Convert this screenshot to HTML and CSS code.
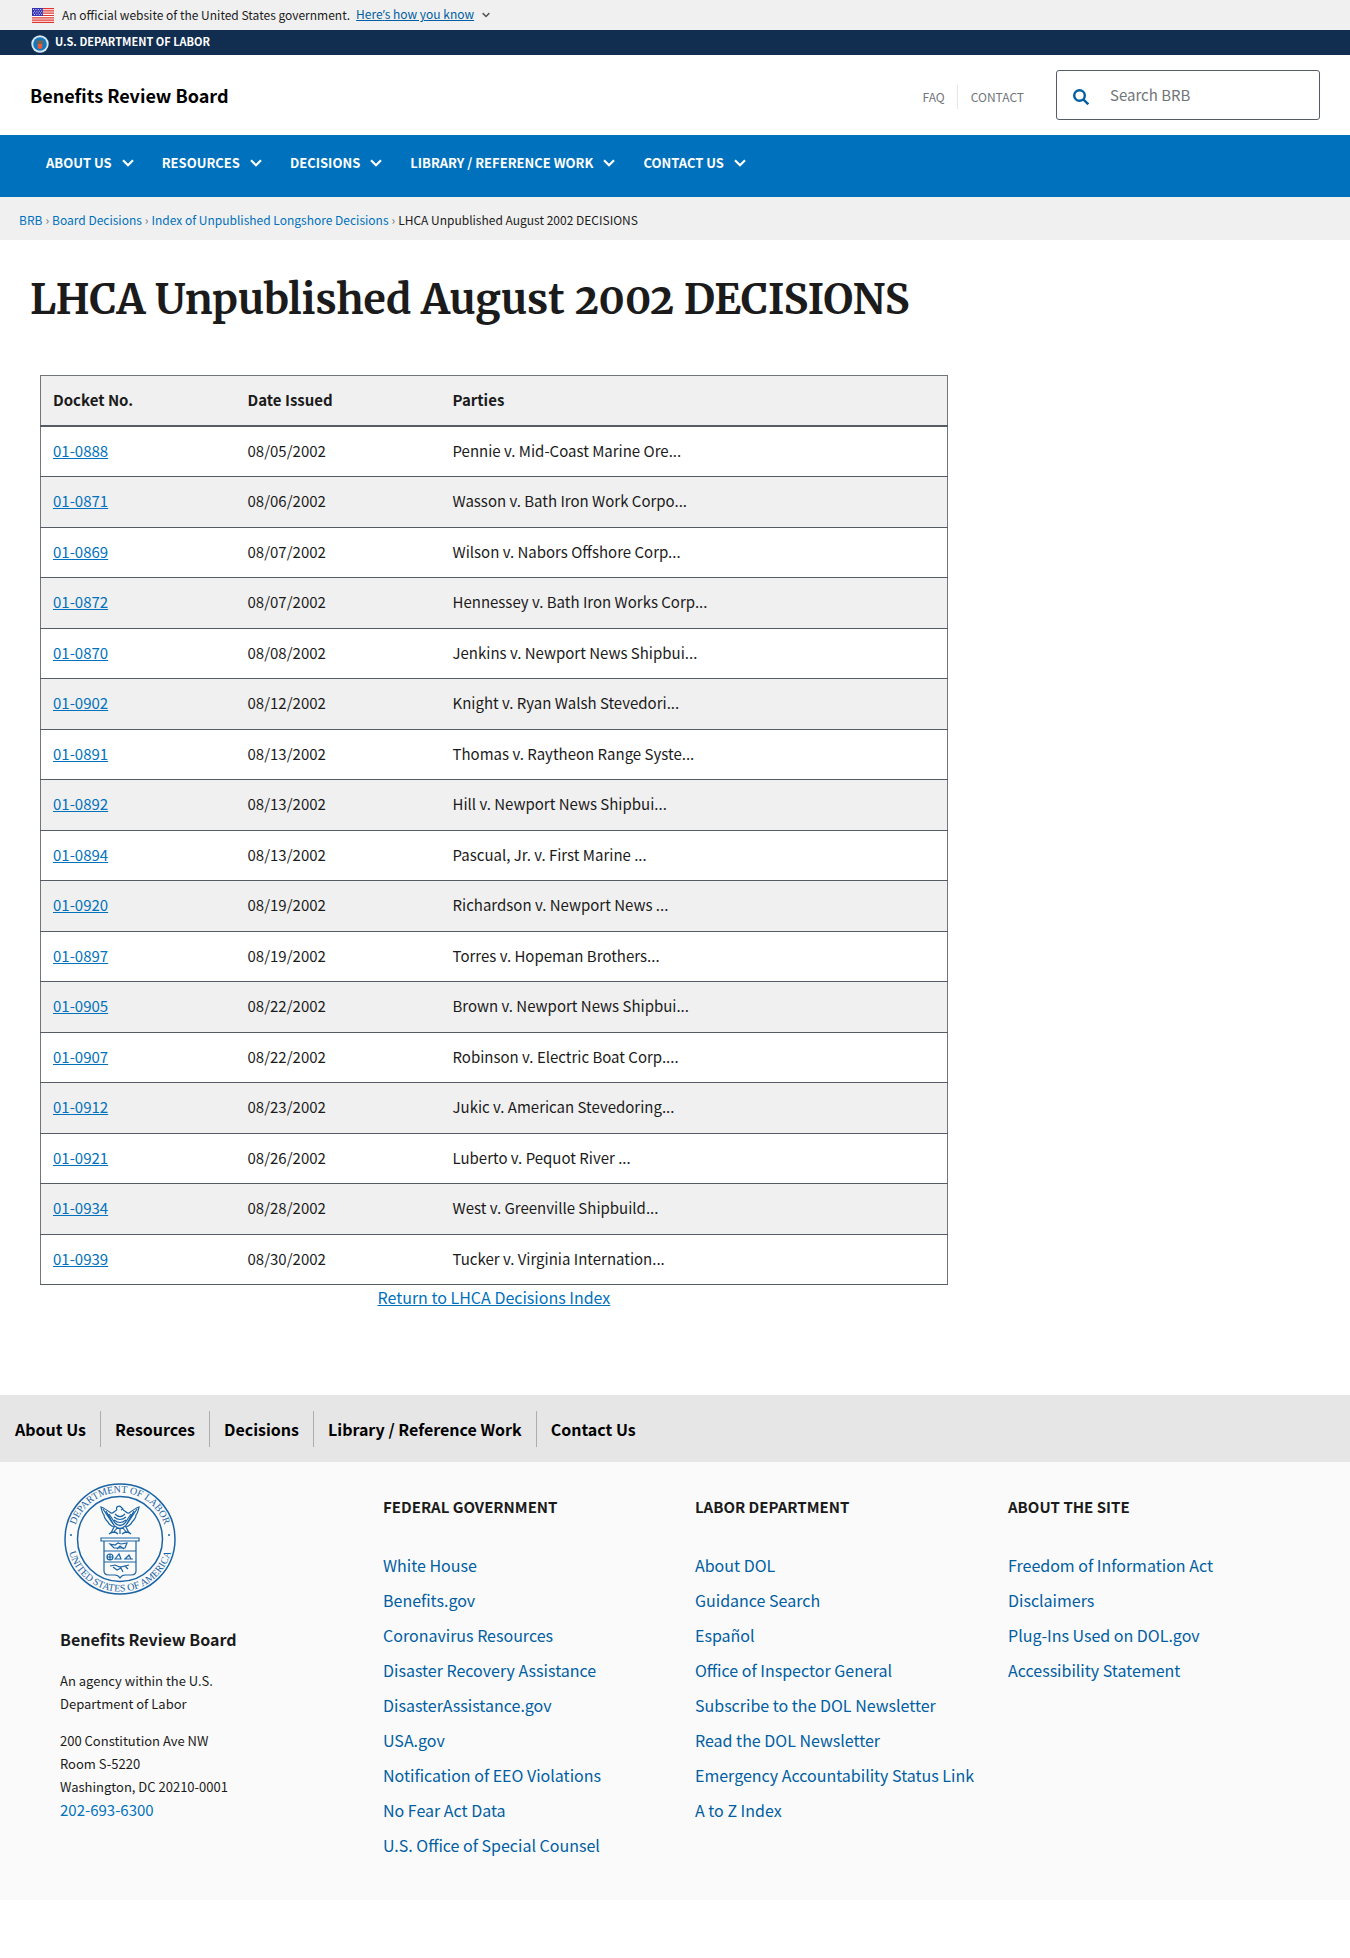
FILE: index.html
```html
<!DOCTYPE html>
<html lang="en">
<head>
<meta charset="utf-8">
<meta name="viewport" content="width=device-width, initial-scale=1">
<title>LHCA Unpublished August 2002 DECISIONS</title>
<link rel="stylesheet" href="styles.css">
</head>
<body>
<svg width="0" height="0" class="sprite" aria-hidden="true">
  <symbol id="chevron" viewBox="0 0 12 8"><path d="M1 1.2l5 5 5-5" fill="none" stroke="currentColor" stroke-width="2.2"/></symbol>
</svg>
<section class="gov-banner" aria-label="Official government website">
  <svg class="flag" viewBox="0 0 22 15" aria-hidden="true">
    <rect width="22" height="15" fill="#fff"/>
    <path d="M0 .6h22M0 2.9h22M0 5.2h22M0 7.5h22M0 9.8h22M0 12.1h22M0 14.4h22" stroke="#e0342f" stroke-width="1.2"/>
    <rect width="11" height="8" fill="#3431b5"/>
    <path d="M1 1.5h10M2 3.2h9M1 4.9h10M2 6.6h9" stroke="#fff" stroke-width=".8" stroke-dasharray="1 1.4"/>
  </svg>
  <span>An official website of the United States government.</span>
  <button type="button" class="banner-toggle"><span class="toggle-text">Here<span class="apostrophe">’</span>s how you know</span><svg class="toggle-icon" aria-hidden="true"><use href="#chevron"/></svg></button>
</section>
<div class="department">
  <svg class="department-seal" viewBox="0 0 18 18" aria-hidden="true">
    <circle cx="9" cy="9" r="8.7" fill="#d5e6f3"/><circle cx="9" cy="9" r="6.8" fill="#1677bd"/>
    <path d="M5.5 5l2 1.2L9 4l1.5 2.2 2-1.2-1 4h-5z" fill="#7b6449"/><path d="M6.8 9h4.4v4L9 14.3 6.8 13z" fill="#ef5a35"/>
  </svg>
  <a href="#">U.S. DEPARTMENT OF LABOR</a>
</div>
<header class="site-header">
  <a class="site-name" href="#">Benefits Review Board</a>
  <nav class="utility" aria-label="Utility"><a href="#">FAQ</a><a href="#">CONTACT</a></nav>
  <form class="search" role="search">
    <svg class="search-icon" viewBox="0 0 16 16" aria-hidden="true"><circle cx="6.5" cy="6.5" r="5.3"/><path d="M10.3 10.3l5 5"/></svg>
    <input type="search" aria-label="Search BRB" placeholder="Search BRB">
  </form>
</header>
<nav class="main-nav" aria-label="Main">
  <button type="button">ABOUT US<svg class="nav-icon" aria-hidden="true"><use href="#chevron"/></svg></button>
  <button type="button">RESOURCES<svg class="nav-icon" aria-hidden="true"><use href="#chevron"/></svg></button>
  <button type="button">DECISIONS<svg class="nav-icon" aria-hidden="true"><use href="#chevron"/></svg></button>
  <button type="button">LIBRARY / REFERENCE WORK<svg class="nav-icon" aria-hidden="true"><use href="#chevron"/></svg></button>
  <button type="button">CONTACT US<svg class="nav-icon" aria-hidden="true"><use href="#chevron"/></svg></button>
</nav>
<nav class="breadcrumb" aria-label="Breadcrumb">
  <a href="#">BRB</a><span class="sep">›</span><a href="#">Board Decisions</a><span class="sep">›</span><a href="#">Index of Unpublished Longshore Decisions</a><span class="sep">›</span><span>LHCA Unpublished August 2002 DECISIONS</span>
</nav>
<main class="content">
  <h1>LHCA Unpublished August 2002 DECISIONS</h1>
  <div class="article">
    <table class="decisions">
      <thead><tr><th scope="col" class="docket">Docket No.</th><th scope="col" class="date">Date Issued</th><th scope="col">Parties</th></tr></thead>
      <tbody>
        <tr><td><a href="#">01-0888</a></td><td>08/05/2002</td><td>Pennie v. Mid-Coast Marine Ore...</td></tr>
        <tr><td><a href="#">01-0871</a></td><td>08/06/2002</td><td>Wasson v. Bath Iron Work Corpo...</td></tr>
        <tr><td><a href="#">01-0869</a></td><td>08/07/2002</td><td>Wilson v. Nabors Offshore Corp...</td></tr>
        <tr><td><a href="#">01-0872</a></td><td>08/07/2002</td><td>Hennessey v. Bath Iron Works Corp...</td></tr>
        <tr><td><a href="#">01-0870</a></td><td>08/08/2002</td><td>Jenkins v. Newport News Shipbui...</td></tr>
        <tr><td><a href="#">01-0902</a></td><td>08/12/2002</td><td>Knight v. Ryan Walsh Stevedori...</td></tr>
        <tr><td><a href="#">01-0891</a></td><td>08/13/2002</td><td>Thomas v. Raytheon Range Syste...</td></tr>
        <tr><td><a href="#">01-0892</a></td><td>08/13/2002</td><td>Hill v. Newport News Shipbui...</td></tr>
        <tr><td><a href="#">01-0894</a></td><td>08/13/2002</td><td>Pascual, Jr. v. First Marine ...</td></tr>
        <tr><td><a href="#">01-0920</a></td><td>08/19/2002</td><td>Richardson v. Newport News ...</td></tr>
        <tr><td><a href="#">01-0897</a></td><td>08/19/2002</td><td>Torres v. Hopeman Brothers...</td></tr>
        <tr><td><a href="#">01-0905</a></td><td>08/22/2002</td><td>Brown v. Newport News Shipbui...</td></tr>
        <tr><td><a href="#">01-0907</a></td><td>08/22/2002</td><td>Robinson v. Electric Boat Corp....</td></tr>
        <tr><td><a href="#">01-0912</a></td><td>08/23/2002</td><td>Jukic v. American Stevedoring...</td></tr>
        <tr><td><a href="#">01-0921</a></td><td>08/26/2002</td><td>Luberto v. Pequot River ...</td></tr>
        <tr><td><a href="#">01-0934</a></td><td>08/28/2002</td><td>West v. Greenville Shipbuild...</td></tr>
        <tr><td><a href="#">01-0939</a></td><td>08/30/2002</td><td>Tucker v. Virginia Internation...</td></tr>
      </tbody>
    </table>
    <p class="return"><a href="#">Return to LHCA Decisions Index</a></p>
  </div>
</main>
<footer>
  <nav class="footer-nav" aria-label="Footer"><a href="#">About Us</a><a href="#">Resources</a><a href="#">Decisions</a><a href="#">Library / Reference Work</a><a href="#">Contact Us</a></nav>
  <div class="footer-main">
    <div class="agency">
      <svg class="seal" viewBox="0 0 112 112" role="img" aria-label="Department of Labor seal">
        <defs><path id="arc-top" d="M9.5 56a46.5 46.5 0 0 1 93 0"/><path id="arc-bottom" d="M3.5 56a52.5 52.5 0 0 0 105 0"/></defs>
        <g fill="none" stroke="#1a64a4" stroke-width="1.5">
          <circle cx="56" cy="56" r="55"/><circle cx="56" cy="56" r="42.5"/>
          <g stroke-width="1.2">
            <path d="M53 27c-2-3 2-5 4-3l2 2-2 1M53 27c-3 1-4 4-6 3-4-3-7-5-10-6 1 4 1 6 3 8 0 3 2 5 4 7 1 3 3 4 6 5l-3 6M59 27c3 1 4 4 6 3 4-3 7-5 10-6-1 4-1 6-3 8 0 3-2 5-4 7-1 3-3 4-6 5l3 6"/>
            <path d="M39 26l10 15M42 28l9 16M45 31l6 9M73 26L63 41M70 28l-9 16M67 31l-6 9M51 31q5 5 10 0M50 34q6 5 12 0M50 37q6 5 12 0M51 40q5 5 10 0M51 43q5 5 10 0M53 45l-4 5M56 45v6M59 45l4 5M45 51q5-4 9 0M58 51q5-4 9 0"/>
            <path d="M37 55h38v3H37zM40 58v30q0 4 5 4h6q3 0 5 3 2-3 5-3h6q5 0 5-4V58M40 68h32M40 79h32"/>
            <path d="M46 61l5 1 3-2 3 1 6-1-2 5H50zM53 66l3-3 4 3M43 74a3 3 0 1 0 6 0 3 3 0 1 0-6 0M43 74h6M46 71v6M51 76l4-5 2 5zM60 76h9M61 76l4-4 2 4M46 83l5-1 5 2 9-2M49 84l4 3 4-2 2 4M61 83l3 3"/>
          </g>
        </g>
        <g class="seal-text"><text><textPath href="#arc-top" startOffset="50%">DEPARTMENT OF LABOR</textPath></text><text><textPath href="#arc-bottom" startOffset="50%">UNITED STATES OF AMERICA</textPath></text></g>
        <circle cx="7" cy="52" r="1" fill="#1a64a4"/><circle cx="105" cy="52" r="1" fill="#1a64a4"/>
      </svg>
      <h2>Benefits Review Board</h2>
      <p>An agency within the U.S.<br>Department of Labor</p>
      <address>200 Constitution Ave NW<br>Room S-5220<br>Washington, DC 20210-0001<br><a href="#">202-693-6300</a></address>
    </div>
    <section class="links"><h3>FEDERAL GOVERNMENT</h3>
      <ul><li><a href="#">White House</a></li><li><a href="#">Benefits.gov</a></li><li><a href="#">Coronavirus Resources</a></li><li><a href="#">Disaster Recovery Assistance</a></li><li><a href="#">DisasterAssistance.gov</a></li><li><a href="#">USA.gov</a></li><li><a href="#">Notification of EEO Violations</a></li><li><a href="#">No Fear Act Data</a></li><li><a href="#">U.S. Office of Special Counsel</a></li></ul>
    </section>
    <section class="links"><h3>LABOR DEPARTMENT</h3>
      <ul><li><a href="#">About DOL</a></li><li><a href="#">Guidance Search</a></li><li><a href="#">Español</a></li><li><a href="#">Office of Inspector General</a></li><li><a href="#">Subscribe to the DOL Newsletter</a></li><li><a href="#">Read the DOL Newsletter</a></li><li><a href="#">Emergency Accountability Status Link</a></li><li><a href="#">A to Z Index</a></li></ul>
    </section>
    <section class="links"><h3>ABOUT THE SITE</h3>
      <ul><li><a href="#">Freedom of Information Act</a></li><li><a href="#">Disclaimers</a></li><li><a href="#">Plug-Ins Used on DOL.gov</a></li><li><a href="#">Accessibility Statement</a></li></ul>
    </section>
  </div>
</footer>
</body>
</html>
```
FILE: styles.css
```css
* { box-sizing: border-box; }

body {
  margin: 0;
  background: #fff;
  color: #1b1b1b;
  font-family: "Source Sans Pro", "Noto Sans CJK SC", sans-serif;
  font-size: 15px;
  line-height: 1.7;
}

a { color: #0071bc; text-decoration: none; }
button { border: 0; background: none; padding: 0; font: inherit; color: inherit; cursor: pointer; }
h1, h2, h3, p, ul { margin: 0; padding: 0; }
ul { list-style: none; }
.sprite { display: none; }

.gov-banner {
  display: flex;
  align-items: center;
  height: 30px;
  padding: 0 32px;
  background: #f0f0f0;
  font-size: 12px;
}
.flag { width: 22px; height: 15px; margin-right: 8px; }
.banner-toggle { display: flex; align-items: center; gap: 8px; margin-left: 6px; color: #005ea2; }
.toggle-text { text-decoration: underline; }
.apostrophe { font-family: "Open Sans", sans-serif; }
.toggle-icon { width: 8px; height: 6px; color: #555; }

.department {
  display: flex;
  gap: 6px;
  height: 25px;
  padding: 0 31px;
  background: #112e51;
}
.department-seal { width: 18px; height: 18px; margin-top: 5px; }
.department a { color: #fff; font-size: 11px; font-weight: 700; line-height: 23px; }

.site-header {
  display: flex;
  align-items: center;
  height: 80px;
  padding: 0 30px;
}
.site-name { color: #000; font-size: 18px; font-weight: 700; }
.utility { display: flex; align-items: center; margin-left: auto; padding: 3px 32px 0 0; font-size: 12px; line-height: 24px; }
.utility a { color: #71767a; }
.utility a + a { margin-left: 12px; padding-left: 13px; border-left: 1px solid #e6e6e6; }
.search {
  display: flex;
  align-items: center;
  width: 264px;
  height: 50px;
  padding: 0 16px;
  border: 1px solid #565c65;
  border-radius: 3px;
}
.search-icon { flex: none; width: 16px; height: 16px; margin: 3px 21px 0 0; fill: none; stroke: #005ea2; stroke-width: 2.4; }
.search input { width: 100%; border: 0; padding: 0; outline: 0; background: none; font: inherit; }
.search input::placeholder { color: #71767a; opacity: 1; }

.main-nav {
  display: flex;
  align-items: flex-start;
  gap: 28px;
  height: 62px;
  padding: 16px 46px;
  background: #0071bc;
  color: #fff;
}
.main-nav button { display: flex; align-items: center; gap: 10px; font-size: 13px; font-weight: 700; line-height: 24px; white-space: nowrap; }
.nav-icon { width: 12px; height: 8px; }

.breadcrumb { padding: 12px 19px 10px; background: #f0f0f0; font-size: 12px; line-height: 21px; }
.sep { margin: 0 3px; color: #71767a; }

.content { padding: 30px 30px 86px; }
h1 {
  font-family: Merriweather, "DejaVu Serif Condensed", "DejaVu Serif", serif;
  font-size: 41px;
  font-weight: 700;
  font-variant-numeric: oldstyle-nums;
  line-height: 60px;
}
.article { width: 72%; padding: 45px 11px 0 10px; }
.decisions { width: 100%; border-collapse: collapse; border: 1px solid #71767a; table-layout: fixed; }
.decisions th, .decisions td { padding: 11px 12px 13px; border-bottom: 1px solid #565c65; text-align: left; }
.decisions th { padding-bottom: 12px; border-bottom: 2px solid #565c65; background: #f0f0f0; }
.decisions tbody tr:nth-child(even) { background: #f0f0f0; }
.docket { width: 195px; }
.date { width: 205px; }
.decisions a, .return a { text-decoration: underline; }
.return { font-size: 16px; line-height: 24px; text-align: center; }

.footer-nav { display: flex; align-items: center; height: 67px; padding-left: 1px; background: #e6e6e6; }
.footer-nav a { padding: 0 14px; color: #000; font-size: 16px; font-weight: 700; line-height: 36px; }
.footer-nav a + a { border-left: 1px solid #a9aeb1; }
.footer-main {
  display: grid;
  grid-template-columns: 323fr 312fr 313fr 282fr;
  padding: 21px 60px 37px;
  background: #fafafa;
}
.seal { display: block; width: 112px; height: 112px; margin-left: 4px; }
.seal-text { fill: #1a64a4; font-family: "Liberation Serif", serif; font-size: 10px; text-anchor: middle; }
.agency { font-size: 13px; line-height: 23px; }
.agency h2 { margin: 32px 0 18px; font-size: 16px; line-height: 24px; }
.agency p { margin-bottom: 14px; }
.agency address { font-style: normal; }
.agency address a { font-size: 15px; }
.links h3 { padding-top: 12px; font-size: 15px; line-height: 24px; }
.links ul { padding-top: 29px; line-height: 35px; }
.links a { color: #005ea2; font-size: 16px; }
```
